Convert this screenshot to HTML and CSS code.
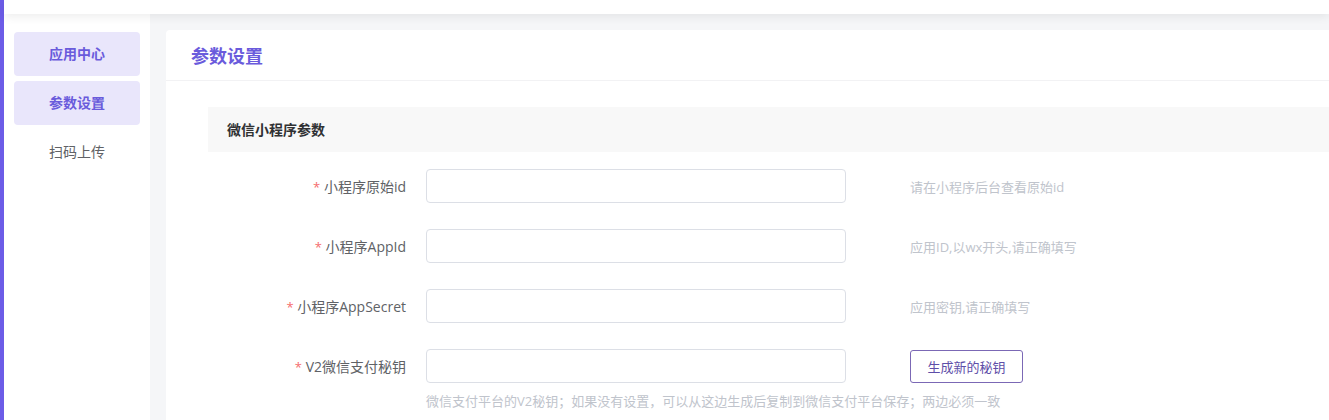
FILE: index.html
```html
<!doctype html>
<html lang="zh-CN">
  <head>
    <meta charset="UTF-8" />
    <title>参数设置</title>
    <link rel="stylesheet" href="styles.css">
  </head>
  <body>
    <div class="app">
      <header class="topbar"></header>

      <div class="layout">
        <aside class="sidebar">
          <div class="side-item active">应用中心</div>
          <div class="side-item active">参数设置</div>
          <div class="side-item">扫码上传</div>
        </aside>

        <main class="main">
          <div class="card">
            <div class="card-header">
              <h2>参数设置</h2>
            </div>

            <div class="card-body">
              <div class="section-title">微信小程序参数</div>

              <div class="form-item">
                <label class="form-label"><span class="req">*</span> 小程序原始id</label>
                <input class="form-input" type="text" />
                <span class="form-tip">请在小程序后台查看原始id</span>
              </div>

              <div class="form-item">
                <label class="form-label"><span class="req">*</span> 小程序AppId</label>
                <input class="form-input" type="text" />
                <span class="form-tip">应用ID,以wx开头,请正确填写</span>
              </div>

              <div class="form-item">
                <label class="form-label"><span class="req">*</span> 小程序AppSecret</label>
                <input class="form-input" type="text" />
                <span class="form-tip">应用密钥,请正确填写</span>
              </div>

              <div class="form-item last">
                <label class="form-label"><span class="req">*</span> V2微信支付秘钥</label>
                <input class="form-input" type="text" />
                <button class="btn-outline" type="button">生成新的秘钥</button>
              </div>
              <div class="form-help">微信支付平台的V2秘钥；如果没有设置，可以从这边生成后复制到微信支付平台保存；两边必须一致</div>
            </div>
          </div>
        </main>
      </div>
    </div>
  </body>
</html>
```

FILE: styles.css
```css
:root {
  --primary: #6a5bdc;
  --primary-light: #e9e6fb;
  --page-bg: #f5f6f8;
  --text: #303133;
  --label: #606266;
  --muted: #c0c4cc;
  --border: #dcdfe6;
}

* {
  margin: 0;
  padding: 0;
  box-sizing: border-box;
}

body {
  font-family: "Open Sans", "Noto Sans CJK SC", sans-serif;
  background-color: var(--page-bg);
  color: var(--text);
  overflow: hidden;
  height: 420px;
}

.app {
  border-left: 4px solid #6c5ce7;
  height: 420px;
  display: flex;
  flex-direction: column;
}

.topbar {
  height: 14px;
  background-color: #fff;
  box-shadow: 0 3px 10px rgba(0, 0, 0, 0.07);
  position: relative;
  z-index: 2;
}

.layout {
  flex: 1;
  display: flex;
}

.sidebar {
  width: 146px;
  flex: none;
  background-color: #fff;
  padding: 18px 10px;
  display: flex;
  flex-direction: column;
  gap: 5px;
}

.side-item {
  height: 44px;
  line-height: 44px;
  text-align: center;
  font-size: 14px;
  color: var(--label);
  border-radius: 4px;
}

.side-item.active {
  background-color: var(--primary-light);
  color: var(--primary);
  font-weight: 600;
}

.main {
  flex: 1;
  padding: 16px 0 0 16px;
  overflow: hidden;
}

.card {
  width: 1200px;
  background-color: #fff;
  border-radius: 4px 0 0 0;
  height: 100%;
}

.card-header {
  height: 51px;
  padding: 0 25px;
  display: flex;
  align-items: center;
  border-bottom: 1px solid #f2f2f4;
}

.card-header h2 {
  font-size: 18px;
  font-weight: 700;
  color: var(--primary);
}

.card-body {
  padding: 26px 0 0 42px;
}

.section-title {
  height: 45px;
  line-height: 45px;
  padding-left: 19px;
  background-color: #f8f8f8;
  font-size: 14px;
  font-weight: 700;
  color: #303133;
  margin-bottom: 17px;
}

.form-item {
  display: flex;
  align-items: center;
  height: 34px;
  margin-bottom: 26px;
}

.form-item.last {
  margin-bottom: 8px;
}

.form-label {
  width: 218px;
  padding-right: 20px;
  text-align: right;
  font-size: 14px;
  color: var(--label);
}

.req {
  color: #f56c6c;
  font-size: 13px;
}

.form-input {
  width: 420px;
  height: 34px;
  border: 1px solid var(--border);
  border-radius: 4px;
  background-color: #fff;
  outline: none;
}

.form-tip {
  margin-left: 64px;
  font-size: 13px;
  color: var(--muted);
}

.btn-outline {
  margin-left: 64px;
  width: 113px;
  height: 33px;
  border: 1px solid #7b68b5;
  border-radius: 3px;
  background-color: #fff;
  color: #5e4ea8;
  font-family: inherit;
  font-size: 13px;
}

.form-help {
  margin-left: 218px;
  font-size: 13px;
  color: var(--muted);
}
```
